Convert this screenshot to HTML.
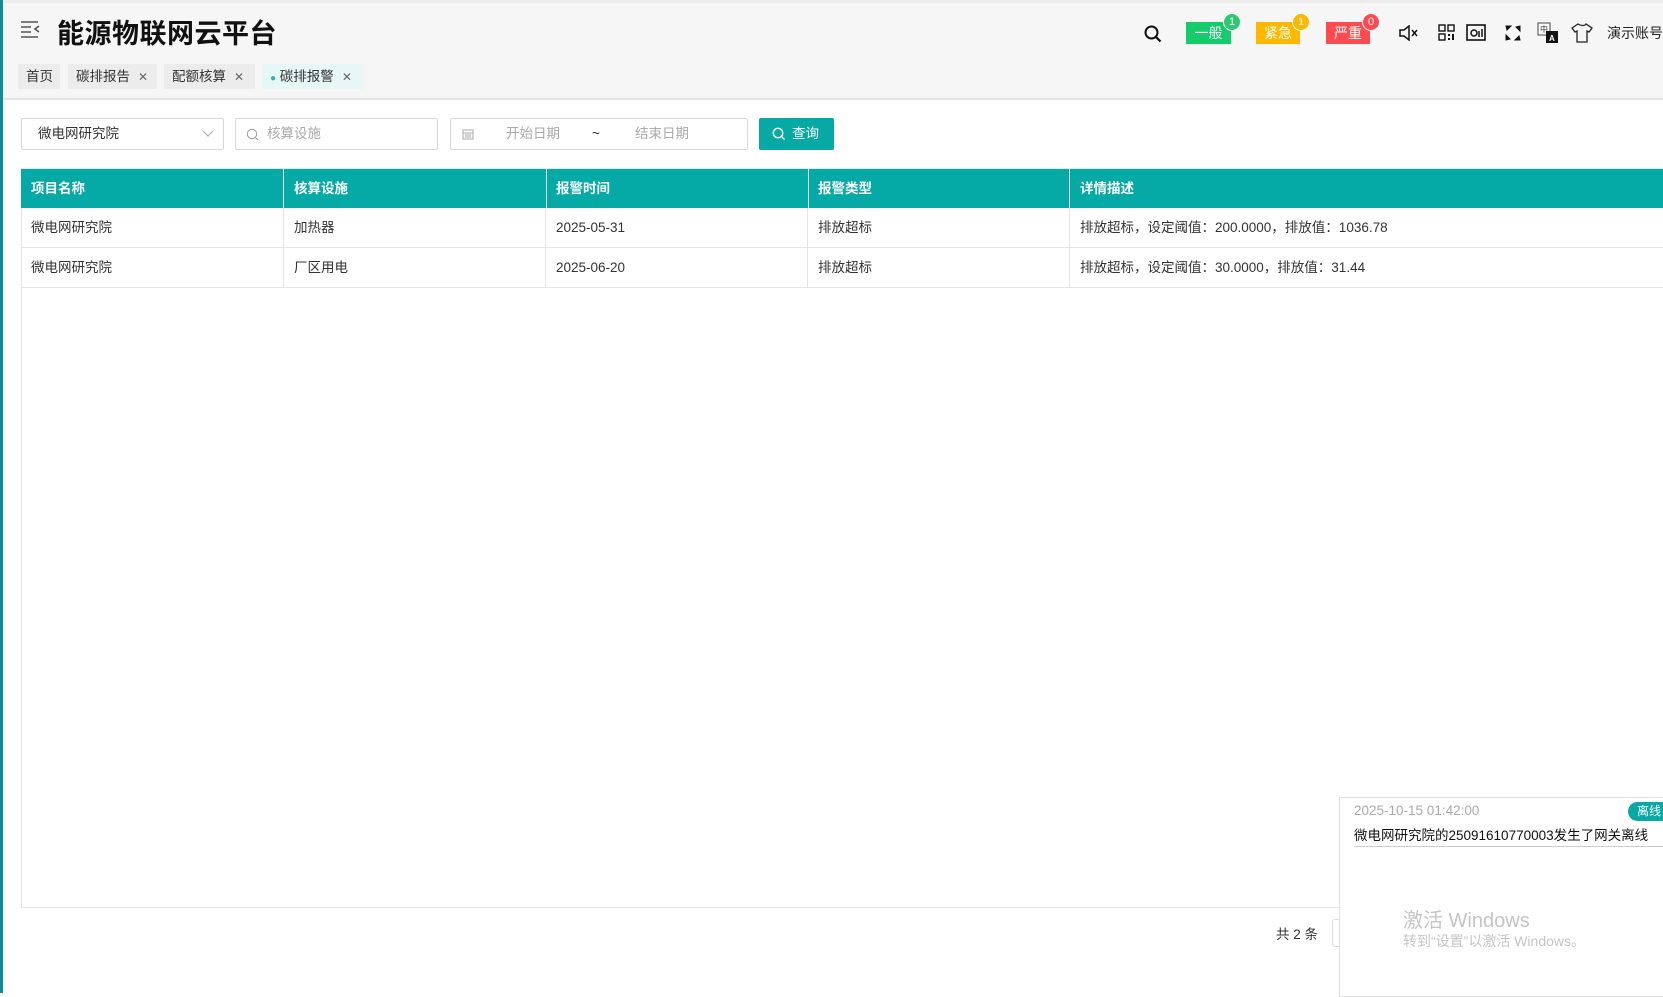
<!DOCTYPE html>
<html><head><meta charset="utf-8"><style>
*{margin:0;padding:0;box-sizing:border-box}
body{width:1663px;height:993px;overflow:hidden;background:#fff;font-family:"Liberation Sans","Noto Sans CJK SC",sans-serif;color:#333;position:relative;font-size:14px}
.a{position:absolute}
.hdr{left:0;top:0;width:1663px;height:100px;background:#f6f6f6;border-bottom:2px solid #e4e4e4;border-top:3px solid #ececec}
.bar{left:0;top:0;width:3px;height:993px;background:#0e8a9b}
.tab{top:64px;height:25px;line-height:25px;font-size:13.5px;background:#ececec;color:#333;padding-left:8px}
.tab .x{color:#666;font-size:12px;margin-left:8px}
.inp{height:32px;border:1px solid #d8d8d8;border-radius:2px;font-size:13.5px;line-height:30px;color:#aaa}
.th{top:169px;height:39px;background:#05aaa6;color:#fff;font-weight:bold;font-size:13.5px;line-height:39px}
.cell{padding-left:10px;border-right:1px solid #e6e6e6}
.row{height:40px;line-height:40px;border-bottom:1px solid #e6e6e6;font-size:13.5px;color:#333}
.bd{color:#fff;font-size:14px;text-align:center;line-height:22px;height:22px;top:22px}
.cnt{position:absolute;top:-9px;right:-10px;width:18px;height:18px;border-radius:50%;border:1px solid #fff;font-size:11px;line-height:16px;text-align:center}
</style></head><body>
<div class="a hdr"></div>
<div class="a bar"></div>
<svg class="a" style="left:20px;top:20px" width="22" height="18" viewBox="0 0 22 18"><path d="M1 2h17M1 7h10M1 12h10M1 17h17M19 6l-4 3 4 3" stroke="#555" stroke-width="1.6" fill="none"/></svg>
<div class="a" style="left:57px;top:12px;font-size:27px;font-weight:bold;color:#111;letter-spacing:0.5px">能源物联网云平台</div>

<div class="a tab" style="left:18px;width:42px">首页</div>
<div class="a tab" style="left:68px;width:89px">碳排报告<span class="x">✕</span></div>
<div class="a tab" style="left:164px;width:91px">配额核算<span class="x">✕</span></div>
<div class="a tab" style="left:262px;width:101px;background:#e6f7f6"><span style="color:#2bb3ad;font-size:10px">●</span> 碳排报警<span class="x">✕</span></div>

<svg class="a" style="left:1143px;top:24px" width="20" height="20" viewBox="0 0 20 20"><circle cx="8.5" cy="8.5" r="6" stroke="#111" stroke-width="2" fill="none"/><path d="M13 13l4.5 4.5" stroke="#111" stroke-width="2.2"/></svg>
<div class="a bd" style="left:1186px;width:45px;background:#14cc6a">一般<span class="cnt" style="background:#2ec773">1</span></div>
<div class="a bd" style="left:1256px;width:44px;background:#ffb800">紧急<span class="cnt" style="background:#ffb800">1</span></div>
<div class="a bd" style="left:1326px;width:44px;background:#ff4a4f">严重<span class="cnt" style="background:#ff4a4f">0</span></div>
<svg class="a" style="left:1399px;top:25px" width="20" height="16" viewBox="0 0 20 16"><path d="M1 5h4l5-4v14l-5-4H1z" stroke="#111" stroke-width="1.5" fill="none"/><path d="M13 5l5 6M18 5l-5 6" stroke="#111" stroke-width="1.5"/></svg>
<svg class="a" style="left:1438px;top:24px" width="17" height="17" viewBox="0 0 17 17"><g stroke="#111" stroke-width="1.4" fill="none"><rect x="1" y="1" width="6" height="6"/><rect x="10" y="1" width="6" height="6"/><rect x="1" y="10" width="6" height="6"/></g><path d="M10 10h2v2h-2zM14 10h2v6h-2zM10 14h2v2h-2z" fill="#111"/></svg>
<svg class="a" style="left:1466px;top:24px" width="20" height="17" viewBox="0 0 20 17"><rect x="1" y="1" width="18" height="15" stroke="#111" stroke-width="1.6" fill="#f5f5f5"/><circle cx="8" cy="9" r="3" stroke="#111" stroke-width="1.5" fill="none"/><path d="M13 7v6M16 5v8" stroke="#111" stroke-width="1.5"/></svg>
<svg class="a" style="left:1505px;top:25px" width="16" height="16" viewBox="0 0 16 16"><path d="M1 1h5l-4 4zM15 1v5l-4-4zM1 15v-5l4 4zM15 15h-5l4-4z" fill="#111" stroke="#111" stroke-width="1"/></svg>
<svg class="a" style="left:1537px;top:22px" width="22" height="22" viewBox="0 0 22 22"><rect x="1" y="1" width="12" height="12" fill="#fff" stroke="#444"/><text x="3" y="10" font-size="8" fill="#333">中</text><rect x="9" y="9" width="12" height="12" fill="#111"/><text x="12" y="19" font-size="8" fill="#fff" font-weight="bold">A</text></svg>
<svg class="a" style="left:1571px;top:23px" width="22" height="20" viewBox="0 0 22 20"><path d="M7 1L1 5l3 4 2-1v11h10V8l2 1 3-4-6-4c-1 2-5 2-8 0z" stroke="#222" stroke-width="1.3" fill="none"/></svg>
<div class="a" style="left:1607px;top:23px;font-size:14px;color:#222">演示账号</div>

<div class="a inp" style="left:21px;top:118px;width:203px;color:#333;padding-left:16px">微电网研究院<svg class="a" style="left:180px;top:11px" width="12" height="8" viewBox="0 0 12 8"><path d="M1 1l5 5 5-5" stroke="#aaa" fill="none"/></svg></div>
<div class="a inp" style="left:235px;top:118px;width:203px;padding-left:31px"><svg class="a" style="left:10px;top:9px" width="13" height="13" viewBox="0 0 13 13"><circle cx="6" cy="6" r="4.7" stroke="#999" fill="none"/><path d="M9.5 9.5l2.5 2.5" stroke="#999"/></svg>核算设施</div>
<div class="a inp" style="left:450px;top:118px;width:298px"><svg class="a" style="left:11px;top:9px" width="12" height="12" viewBox="0 0 12 12"><rect x="1" y="2" width="10" height="9" stroke="#aaa" fill="none"/><path d="M1 5h10M3 7h6M3 9h6" stroke="#aaa"/></svg><span class="a" style="left:55px">开始日期</span><span class="a" style="left:141px;color:#333">~</span><span class="a" style="left:184px">结束日期</span></div>
<div class="a" style="left:759px;top:118px;width:75px;height:32px;background:#07a9a5;border-radius:2px;color:#fff;font-size:13.5px;line-height:32px;padding-left:33px"><svg class="a" style="left:13px;top:9px" width="14" height="14" viewBox="0 0 14 14"><circle cx="6" cy="6" r="4.7" stroke="#fff" stroke-width="1.4" fill="none"/><path d="M9.5 9.5l3 3" stroke="#fff" stroke-width="1.4"/></svg>查询</div>

<div class="a" style="left:21px;top:168px;width:1642px;height:740px;border-left:1px solid #e6e6e6;border-bottom:1px solid #e6e6e6;border-top:1px solid #e6e6e6"></div>
<div class="a th" style="left:21px;width:1642px">
<span class="a cell" style="left:0;width:263px;border-color:#e6f4f3">项目名称</span>
<span class="a cell" style="left:263px;width:263px;border-color:#e6f4f3">核算设施</span>
<span class="a cell" style="left:525px;width:263px;border-color:#e6f4f3">报警时间</span>
<span class="a cell" style="left:787px;width:262px;border-color:#e6f4f3">报警类型</span>
<span class="a cell" style="left:1049px;width:600px;border:0">详情描述</span>
</div>
<div class="a row" style="left:21px;top:208px;width:1642px">
<span class="a cell" style="left:0;width:263px">微电网研究院</span><span class="a cell" style="left:263px;width:262px">加热器</span><span class="a cell" style="left:525px;width:262px">2025-05-31</span><span class="a cell" style="left:787px;width:262px">排放超标</span><span class="a cell" style="left:1049px;width:600px;border:0">排放超标，设定阈值：200.0000，排放值：1036.78</span></div>
<div class="a row" style="left:21px;top:248px;width:1642px">
<span class="a cell" style="left:0;width:263px">微电网研究院</span><span class="a cell" style="left:263px;width:262px">厂区用电</span><span class="a cell" style="left:525px;width:262px">2025-06-20</span><span class="a cell" style="left:787px;width:262px">排放超标</span><span class="a cell" style="left:1049px;width:600px;border:0">排放超标，设定阈值：30.0000，排放值：31.44</span></div>

<div class="a" style="left:1276px;top:923px;font-size:13.5px;color:#333">共 2 条</div>
<div class="a" style="left:1332px;top:919px;width:20px;height:28px;border:1px solid #ddd;border-radius:3px"></div>

<div class="a" style="left:1339px;top:797px;width:330px;height:200px;background:#fff;border:1px solid #e0e0e0"></div>
<div class="a" style="left:1354px;top:803px;font-size:13.5px;color:#aaa">2025-10-15 01:42:00</div>
<div class="a" style="left:1628px;top:802px;width:40px;height:19px;border-radius:10px 0 0 10px;background:#07a9a5;color:#fff;font-size:12px;line-height:19px;padding-left:9px">离线</div>
<div class="a" style="left:1354px;top:824px;font-size:13.5px;color:#111">微电网研究院的25091610770003发生了网关离线</div>
<div class="a" style="left:1354px;top:846px;width:309px;height:1px;background:#ccc"></div>
<div class="a" style="left:1403px;top:904px;font-size:20px;color:#c5c5c5">激活 Windows</div>
<div class="a" style="left:1403px;top:931px;font-size:14px;color:#c5c5c5">转到“设置”以激活 Windows。</div>
</body></html>
